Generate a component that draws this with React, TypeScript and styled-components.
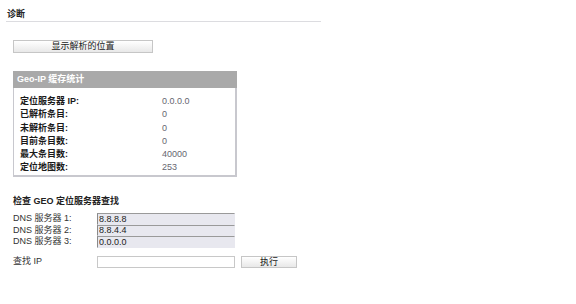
import React from "react";
import styled, { createGlobalStyle } from "styled-components";

const Global = createGlobalStyle`
  html, body { margin: 0; padding: 0; background: #fff; }
  body {
    font-family: "Liberation Sans", "Noto Sans CJK SC", sans-serif;
    font-size: 9px;
    color: #222;
  }
`;

const Page = styled.div`
  width: 576px;
  height: 304px;
  padding: 9px 0 0 6px;
  box-sizing: border-box;
  display: flex;
  flex-direction: column;
`;

const Title = styled.div`
  font-weight: bold;
  font-size: 9px;
  line-height: 10px;
  padding: 0 0 2px 1px;
  width: 314px;
  border-bottom: 1px solid #dcdce0;
  color: #222;
`;

const Body = styled.div`
  padding-left: 7px;
  display: flex;
  flex-direction: column;
`;

const GreyButton = styled.button<{ $w: number }>`
  width: ${(p) => p.$w}px;
  height: 13px;
  padding: 0;
  margin: 0;
  font-family: inherit;
  font-size: 9px;
  line-height: 11px;
  color: #222;
  background: linear-gradient(#ffffff, #e8e8e8);
  border: 1px solid #c6c6c6;
  border-radius: 0;
  text-align: center;
`;

const ShowButtonWrap = styled.div`
  margin-top: 18px;
`;

const StatsBox = styled.div`
  margin-top: 18px;
  width: 224px;
  height: 106px;
  box-sizing: border-box;
  border: 1px solid #c8c8ce;
  border-right-width: 2px;
  border-bottom-width: 2px;
  border-top: none;
  display: flex;
  flex-direction: column;
`;

const StatsHeader = styled.div`
  height: 17px;
  background: #a9a9a9;
  color: #fff;
  font-weight: bold;
  padding-left: 4px;
  line-height: 17px;
  margin: 0 -2px 0 -1px;
`;

const StatsRows = styled.div`
  padding: 7px 0 0 6px;
  display: flex;
  flex-direction: column;
`;

const StatRow = styled.div`
  display: grid;
  grid-template-columns: 142px 1fr;
  height: 13.3px;
  line-height: 13px;
`;

const StatLabel = styled.span`
  font-weight: bold;
  color: #1a1a1a;
`;

const StatValue = styled.span`
  color: #666670;
`;

const SectionLabel = styled.div`
  margin-top: 19px;
  font-weight: bold;
  line-height: 10px;
  color: #222;
`;

const FormGrid = styled.div`
  margin-top: 7px;
  display: grid;
  grid-template-columns: 78px 138px 56px;
  column-gap: 6px;
  align-items: center;
`;

const FieldLabel = styled.span<{ $gap?: number }>`
  color: #333;
  line-height: 11px;
  margin-top: ${(p) => p.$gap ?? 0}px;
`;

const Field = styled.input<{ $plain?: boolean }>`
  box-sizing: border-box;
  width: 138px;
  height: 11.5px;
  margin: 0;
  padding: 0 1px;
  font-family: "Liberation Sans", sans-serif;
  font-size: 9px;
  color: #222;
  background: ${(p) => (p.$plain ? "#fff" : "#e8e8ef")};
  border: none;
  border-top: 1px solid ${(p) => (p.$plain ? "#c8c8c8" : "#9a9a9a")};
  border-left: 1px solid ${(p) => (p.$plain ? "#c8c8c8" : "#8a8a8a")};
  border-right: 1px solid ${(p) => (p.$plain ? "#c8c8c8" : "#e8e8ef")};
  border-bottom: 1px solid ${(p) => (p.$plain ? "#c8c8c8" : "#e8e8ef")};
  outline: none;
`;

const PlainField = styled(Field)`
  margin-top: 8px;
  height: 12px;
`;

const RunButton = styled(GreyButton)`
  margin-top: 8px;
  height: 12px;
  line-height: 10px;
`;

const Empty = styled.span``;

const stats: [string, string][] = [
  ["定位服务器 IP:", "0.0.0.0"],
  ["已解析条目:", "0"],
  ["未解析条目:", "0"],
  ["目前条目数:", "0"],
  ["最大条目数:", "40000"],
  ["定位地图数:", "253"],
];

const dns = ["8.8.8.8", "8.8.4.4", "0.0.0.0"];

export default function App() {
  return (
    <>
      <Global />
      <Page>
        <Title>诊断</Title>
        <Body>
          <ShowButtonWrap>
            <GreyButton $w={140}>显示解析的位置</GreyButton>
          </ShowButtonWrap>
          <StatsBox>
            <StatsHeader>Geo-IP 缓存统计</StatsHeader>
            <StatsRows>
              {stats.map(([k, v]) => (
                <StatRow key={k}>
                  <StatLabel>{k}</StatLabel>
                  <StatValue>{v}</StatValue>
                </StatRow>
              ))}
            </StatsRows>
          </StatsBox>
          <SectionLabel>检查 GEO 定位服务器查找</SectionLabel>
          <FormGrid>
            {dns.map((d, i) => (
              <React.Fragment key={i}>
                <FieldLabel>DNS 服务器 {i + 1}:</FieldLabel>
                <Field readOnly defaultValue={d} />
                <Empty />
              </React.Fragment>
            ))}
            <FieldLabel $gap={8}>查找 IP</FieldLabel>
            <PlainField $plain readOnly defaultValue="" />
            <RunButton $w={56}>执行</RunButton>
          </FormGrid>
        </Body>
      </Page>
    </>
  );
}
